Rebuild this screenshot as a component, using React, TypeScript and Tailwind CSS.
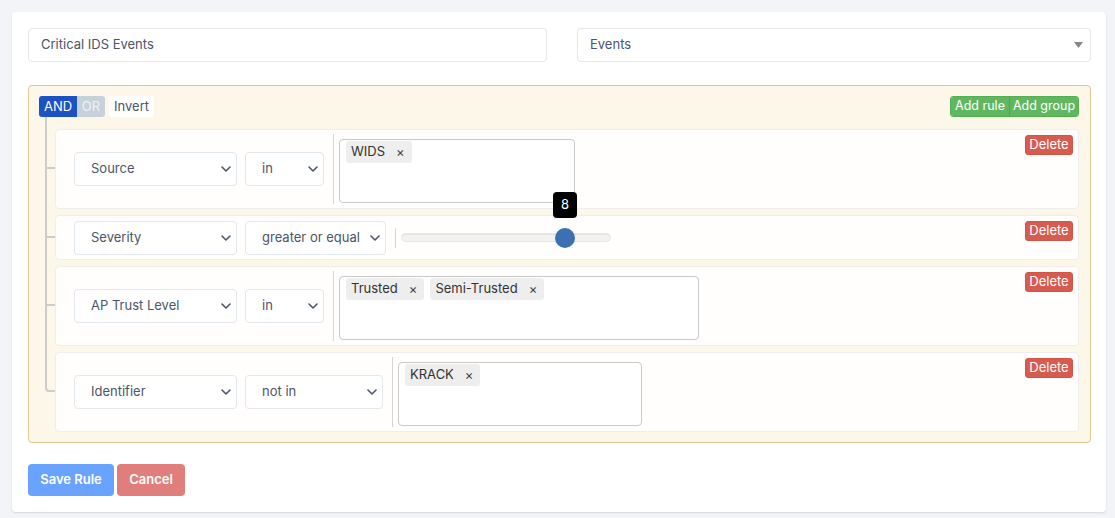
import React from "react";

const font = { fontFamily: "Inter, 'Noto Sans', 'Liberation Sans', sans-serif" };

function Chevron() {
  return (
    <svg width="10" height="6" viewBox="0 0 10 6" fill="none">
      <path d="M1 1l4 4 4-4" stroke="#4a5568" strokeWidth="1.6" strokeLinecap="round" strokeLinejoin="round" />
    </svg>
  );
}

function SelectBox({ label, className }: { label: string; className: string }) {
  return (
    <div
      className={`flex h-[34px] shrink-0 items-center justify-between rounded-[4px] border border-[#e3e6ea] bg-white pl-4 pr-[5px] text-[13px] text-[#4a5568] ${className}`}
    >
      <span>{label}</span>
      <Chevron />
    </div>
  );
}

function Tag({ label }: { label: string }) {
  return (
    <div className="flex h-[22px] items-center rounded-[3px] bg-[#eeeeee] pl-[5px] pr-[7px] text-[13px] text-[#333]">
      <span>{label}</span>
      <span className="ml-[11px] text-[13px] leading-none text-[#444]">×</span>
    </div>
  );
}

function ValueBox({ tags, className }: { tags: string[]; className: string }) {
  return (
    <div className="ml-[9px] flex self-stretch border-l border-[#d4d4d4] pb-[1px] pl-[5px] pt-[5px]">
      <div className={`flex h-[64px] items-start gap-[6px] rounded-[4px] border border-[#c9c9c9] bg-white pl-[6px] pt-[1px] ${className}`}>
        {tags.map((t) => (
          <Tag key={t} label={t} />
        ))}
      </div>
    </div>
  );
}

function DeleteBtn() {
  return (
    <button className="mt-[1px] flex h-[20px] w-[48px] items-center justify-center rounded-[3px] border border-[#cf5548] bg-[#d55c4f] text-[13px] text-white">
      Delete
    </button>
  );
}

function TreeLines({ first, last }: { first: boolean; last: boolean }) {
  return (
    <>
      <div
        className={`absolute left-[-10px] w-[10px] border-b-2 border-l-2 border-[#cccccc] ${first ? "top-[-12px] h-[calc(50%+12px)]" : "top-[-6px] h-[calc(50%+6px)]"} ${last ? "rounded-bl-[4px]" : ""}`}
      />
      {!last && <div className="absolute left-[-10px] top-1/2 h-1/2 w-[10px] border-l-2 border-[#cccccc]" />}
    </>
  );
}

function Rule({
  children,
  first = false,
  last = false,
}: {
  children: React.ReactNode;
  first?: boolean;
  last?: boolean;
}) {
  return (
    <div className="relative">
      <TreeLines first={first} last={last} />
      <div className="flex items-start justify-between rounded-[4px] border border-[#eeeeee] bg-[#fffefc] py-[4px] pl-[18px] pr-[5px]">
        <div className="flex min-h-[35px] items-center self-center">{children}</div>
        <DeleteBtn />
      </div>
    </div>
  );
}

export default function App() {
  return (
    <div className="min-h-[518px] bg-[#f3f4f8] pb-3 pl-3 pr-[9px] pt-3" style={font}>
      <div className="rounded-[4px] bg-white pb-[16px] pl-4 pr-[15px] pt-4 shadow-[0_1px_2px_rgba(0,0,0,0.12)]">
        <div className="flex gap-[30px]">
          <div className="flex h-[34px] flex-1 items-center rounded-[4px] border border-[#e3e6ea] bg-white px-3 text-[13px] text-[#4a5568]">
            Critical IDS Events
          </div>
          <div className="flex h-[34px] flex-1 items-center justify-between rounded-[4px] border border-[#e3e6ea] bg-white pl-3 pr-[7px] text-[13px] text-[#4a5568]">
            <span>Events</span>
            <svg width="9" height="6" viewBox="0 0 9 6">
              <path d="M0 0h9L4.5 6z" fill="#888" />
            </svg>
          </div>
        </div>

        <div className="mt-[23px] rounded-[4px] border border-[#dcc896] bg-[#fcf7e8] p-[10px]">
          <div className="flex h-[21px] items-center justify-between">
            <div className="flex items-center">
              <div className="flex h-[21px] overflow-hidden rounded-[3px] text-[13px]">
                <div className="flex w-[38px] items-center justify-center bg-[#1d52c2] text-white">AND</div>
                <div className="flex w-[28px] items-center justify-center bg-[#c6d1d9] text-[#eef2f5]">OR</div>
              </div>
              <div className="ml-[4px] flex h-[21px] w-[45px] items-center justify-center rounded-[3px] bg-white text-[13px] text-[#4a5568]">
                Invert
              </div>
            </div>
            <div className="mr-[1px] flex h-[21px] overflow-hidden rounded-[3px] border border-[#54ae54] text-[12.5px] text-white">
              <div className="flex w-[59px] items-center justify-center border-r border-[#4fa64f] bg-[#5fb85f]">Add rule</div>
              <div className="flex w-[68px] items-center justify-center bg-[#5fb85f]">Add group</div>
            </div>
          </div>

          <div className="mt-[12px] flex flex-col gap-[6px] pl-[16px] pr-[1px]">
            <Rule first>
              <SelectBox label="Source" className="w-[163px]" />
              <SelectBox label="in" className="ml-[8px] w-[79px]" />
              <ValueBox tags={["WIDS"]} className="w-[236px]" />
            </Rule>
            <Rule>
              <SelectBox label="Severity" className="w-[163px]" />
              <SelectBox label="greater or equal" className="ml-[8px] w-[141px]" />
              <div className="ml-[9px] flex h-[20px] items-center border-l border-[#d4d4d4] pl-[5px]">
                <div className="relative h-[9px] w-[210px] rounded-full border border-[#e6e6e6] bg-[#f2f2f2] shadow-[inset_0_1px_1px_rgba(0,0,0,0.06)]">
                  <div className="absolute left-[153px] top-[-6px] h-[20px] w-[20px] rounded-full bg-[#3d70b0]" />
                  <div className="absolute left-[151px] top-[-42px] flex h-[26px] w-[24px] items-center justify-center rounded-[4px] bg-black text-[13px] text-white">
                    8
                  </div>
                </div>
              </div>
            </Rule>
            <Rule>
              <SelectBox label="AP Trust Level" className="w-[163px]" />
              <SelectBox label="in" className="ml-[8px] w-[79px]" />
              <ValueBox tags={["Trusted", "Semi-Trusted"]} className="w-[360px]" />
            </Rule>
            <Rule last>
              <SelectBox label="Identifier" className="w-[163px]" />
              <SelectBox label="not in" className="ml-[8px] w-[138px]" />
              <ValueBox tags={["KRACK"]} className="w-[244px]" />
            </Rule>
          </div>
        </div>

        <div className="mt-[21px] flex gap-[3px]">
          <button className="flex h-[32px] w-[86px] items-center justify-center rounded-[4px] bg-[#69a2ff] text-[13px] font-semibold text-white">
            Save Rule
          </button>
          <button className="flex h-[32px] w-[68px] items-center justify-center rounded-[4px] bg-[#e07e7b] text-[13px] font-semibold text-white">
            Cancel
          </button>
        </div>
      </div>
    </div>
  );
}
